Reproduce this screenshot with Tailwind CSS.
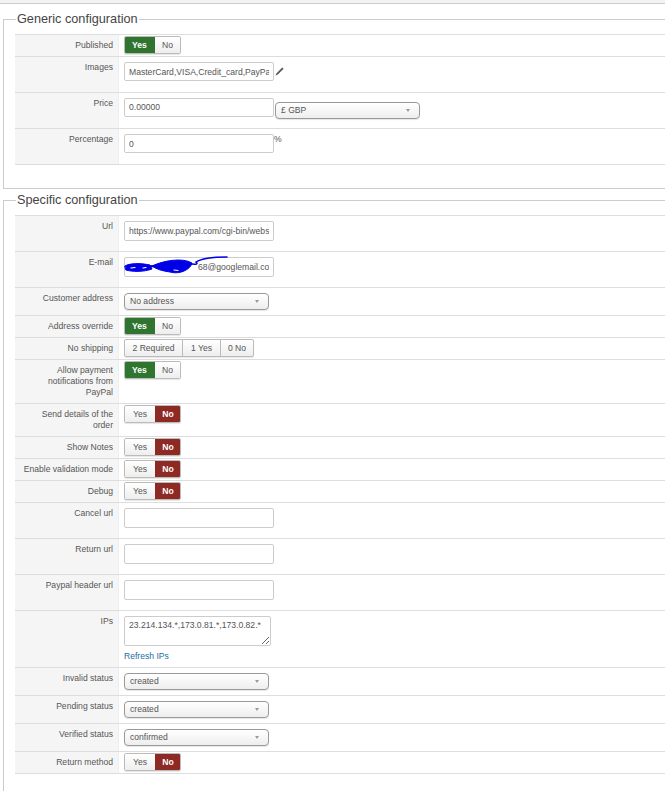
<!DOCTYPE html>
<html lang="en">

<head>
    <meta charset="UTF-8" />
    <meta name="viewport" content="width=device-width, initial-scale=1" />
    <title>Payment method</title>
    <script src="https://cdn.jsdelivr.net/npm/@tailwindcss/browser@4"></script>
</head>

<body class="bg-white h-[791px] overflow-hidden font-['Liberation_Sans',Arial,sans-serif] text-[8.6px] leading-[11px] text-[#555]">
    <div class="h-1 bg-[#f3f3f3] border-b border-[#ccc]"></div>

    <!-- Generic configuration -->
    <fieldset class="ml-[3px] mt-[7px] -mr-2 h-[178px] border border-[#ccc] pl-[11px]">
        <legend class="ml-[1px] px-[1px] text-[12.7px] leading-4 text-[#444]">Generic configuration</legend>
        <div class="mt-[7px] border-t border-[#ddd]">
            <div class="flex h-[22px] border-b border-[#ddd]">
                <div class="w-[104px] shrink-0 bg-[#f5f5f5] border-r border-[#eee] pr-[5px] pt-[5px] text-right">Published</div>
                <div class="pl-[5px] pt-[1px]">
                    <div class="flex w-[57px] h-[18px] rounded-[2px] border border-[#bbb] overflow-hidden shadow-[0_1px_1px_rgba(0,0,0,0.1)]">
                        <span class="w-[31px] -m-px mr-0 bg-[#2f752f] text-white font-bold flex items-center justify-center">Yes</span>
                        <span class="flex-1 bg-gradient-to-b from-white to-[#eee] flex items-center justify-center">No</span>
                    </div>
                </div>
            </div>
            <div class="flex h-[36px] border-b border-[#ddd]">
                <div class="w-[104px] shrink-0 bg-[#f5f5f5] border-r border-[#eee] pr-[5px] pt-[5px] text-right">Images</div>
                <div class="pl-[5px] pt-[5px] flex items-start">
                    <input class="w-[150px] h-[19px] border border-[#ccc] rounded-[2px] px-[4px]" value="MasterCard,VISA,Credit_card,PayPal" />
                    <svg class="mt-[4px] ml-[1px]" width="10" height="10" viewBox="0 0 10 10"><path d="M0.5 9.5 L1.4 7.4 L7.2 1.4 L8.6 2.8 L2.8 8.6 Z" fill="#555" /></svg>
                </div>
            </div>
            <div class="flex h-[36px] border-b border-[#ddd]">
                <div class="w-[104px] shrink-0 bg-[#f5f5f5] border-r border-[#eee] pr-[5px] pt-[5px] text-right">Price</div>
                <div class="pl-[5px] pt-[5px] flex items-start">
                    <input class="w-[150px] h-[19px] border border-[#ccc] rounded-[2px] px-[4px] pb-px" value="0.00000" />
                    <div class="mt-[4px] ml-px w-[145px] h-[17px] rounded-[4px] border border-[#999] shadow-[0_1px_1px_rgba(0,0,0,0.1)] bg-gradient-to-b from-white to-[#eee] flex items-center justify-between pl-[5px] pr-[9px]"><span>£ GBP</span><span class="border-x-[2px] border-t-[3px] border-x-transparent border-t-[#999]"></span></div>
                </div>
            </div>
            <div class="flex h-[36px] border-b border-[#ddd]">
                <div class="w-[104px] shrink-0 bg-[#f5f5f5] border-r border-[#eee] pr-[5px] pt-[5px] text-right">Percentage</div>
                <div class="pl-[5px] pt-[5px] flex items-start">
                    <input class="w-[150px] h-[19px] border border-[#ccc] rounded-[2px] px-[4px]" value="0" />
                    <span>%</span>
                </div>
            </div>
        </div>
    </fieldset>

    <!-- Specific configuration -->
    <fieldset class="ml-[3px] mt-[3px] -mr-2 border border-b-0 border-[#ccc] pl-[11px] h-[600px]">
        <legend class="ml-[1px] px-[1px] text-[12.7px] leading-4 text-[#444]">Specific configuration</legend>
        <div class="mt-[7px] border-t border-[#ddd]">
            <div class="flex h-[36px] border-b border-[#ddd]">
                <div class="w-[104px] shrink-0 bg-[#f5f5f5] border-r border-[#eee] pr-[5px] pt-[5px] text-right">Url</div>
                <div class="pl-[5px] pt-[5px]"><input class="block w-[150px] h-[20px] border border-[#ccc] rounded-[2px] px-[4px] pb-px" value="https://www.paypal.com/cgi-bin/webscr" /></div>
            </div>
            <div class="flex h-[36px] border-b border-[#ddd]">
                <div class="w-[104px] shrink-0 bg-[#f5f5f5] border-r border-[#eee] pr-[5px] pt-[5px] text-right">E-mail</div>
                <div class="pl-[5px] pt-[5px] relative">
                    <input class="block w-[150px] h-[20px] border border-[#ccc] rounded-[2px] pl-[73px] pr-[4px]" value="68@googlemail.com" />
                    <!-- scribbled out address -->
                    <svg class="absolute left-[5px] top-[3px]" width="106" height="20" viewBox="0 0 106 20" fill="none" stroke="#0000e6" stroke-linecap="round">
                        <path d="M1 11 C6 8 16 8 26 10 L28 14 C20 17 8 17 2 15 Z" fill="#0000e6" stroke-width="1" />
                        <path d="M24 11 C34 12 40 11 48 9" stroke-width="2" />
                        <path d="M28 11 C38 6 58 2 68 8 C67 14 56 20 46 17 C38 16 32 14 28 11 Z" fill="#0000e6" stroke-width="1" />
                        <path d="M64 8 C74 11 74 8 72 7 C78 3 88 2 103 2" stroke-width="1.5" />
                        <path d="M7 13 L11 12.5 M19 13 L22 12.5 M50 15 L54 15.5" stroke="#fff" stroke-width="1.2" />
                    </svg>
                </div>
            </div>
            <div class="flex h-[28px] border-b border-[#ddd]">
                <div class="w-[104px] shrink-0 bg-[#f5f5f5] border-r border-[#eee] pr-[5px] pt-[5px] text-right">Customer address</div>
                <div class="pl-[5px] pt-[5px]"><div class="w-[145px] h-[17px] rounded-[4px] border border-[#999] shadow-[0_1px_1px_rgba(0,0,0,0.1)] bg-gradient-to-b from-white to-[#eee] flex items-center justify-between pl-[5px] pr-[9px]"><span>No address</span><span class="border-x-[2px] border-t-[3px] border-x-transparent border-t-[#999]"></span></div></div>
            </div>
            <div class="flex h-[22px] border-b border-[#ddd]">
                <div class="w-[104px] shrink-0 bg-[#f5f5f5] border-r border-[#eee] pr-[5px] pt-[5px] text-right">Address override</div>
                <div class="pl-[5px] pt-[1px]">
                    <div class="flex w-[57px] h-[18px] rounded-[2px] border border-[#bbb] overflow-hidden shadow-[0_1px_1px_rgba(0,0,0,0.1)]">
                        <span class="w-[31px] -m-px mr-0 bg-[#2f752f] text-white font-bold flex items-center justify-center">Yes</span>
                        <span class="flex-1 bg-gradient-to-b from-white to-[#eee] flex items-center justify-center">No</span>
                    </div>
                </div>
            </div>
            <div class="flex h-[22px] border-b border-[#ddd]">
                <div class="w-[104px] shrink-0 bg-[#f5f5f5] border-r border-[#eee] pr-[5px] pt-[5px] text-right">No shipping</div>
                <div class="pl-[5px] pt-[1px]">
                    <div class="flex w-[130px] h-[18px] rounded-[2px] border border-[#bbb] overflow-hidden bg-gradient-to-b from-white to-[#eee] shadow-[0_1px_1px_rgba(0,0,0,0.1)]">
                        <span class="w-[58px] border-r border-[#bbb] flex items-center justify-center">2 Required</span>
                        <span class="w-[38px] border-r border-[#bbb] flex items-center justify-center">1 Yes</span>
                        <span class="flex-1 flex items-center justify-center">0 No</span>
                    </div>
                </div>
            </div>
            <div class="flex h-[44px] border-b border-[#ddd]">
                <div class="w-[104px] shrink-0 bg-[#f5f5f5] border-r border-[#eee] pl-[8px] pr-[5px] pt-[5px] text-right">Allow payment notifications from PayPal</div>
                <div class="pl-[5px] pt-[1px]">
                    <div class="flex w-[57px] h-[18px] rounded-[2px] border border-[#bbb] overflow-hidden shadow-[0_1px_1px_rgba(0,0,0,0.1)]">
                        <span class="w-[31px] -m-px mr-0 bg-[#2f752f] text-white font-bold flex items-center justify-center">Yes</span>
                        <span class="flex-1 bg-gradient-to-b from-white to-[#eee] flex items-center justify-center">No</span>
                    </div>
                </div>
            </div>
            <div class="flex h-[33px] border-b border-[#ddd]">
                <div class="w-[104px] shrink-0 bg-[#f5f5f5] border-r border-[#eee] pl-[8px] pr-[5px] pt-[5px] text-right">Send details of the order</div>
                <div class="pl-[5px] pt-[1px]">
                    <div class="flex w-[57px] h-[18px] rounded-[2px] border border-[#bbb] overflow-hidden shadow-[0_1px_1px_rgba(0,0,0,0.1)]">
                        <span class="w-[30px] bg-gradient-to-b from-white to-[#eee] flex items-center justify-center">Yes</span>
                        <span class="flex-1 -m-px ml-0 bg-[#8e2a24] text-white font-bold flex items-center justify-center">No</span>
                    </div>
                </div>
            </div>
            <div class="flex h-[22px] border-b border-[#ddd]">
                <div class="w-[104px] shrink-0 bg-[#f5f5f5] border-r border-[#eee] pr-[5px] pt-[5px] text-right">Show Notes</div>
                <div class="pl-[5px] pt-[1px]">
                    <div class="flex w-[57px] h-[18px] rounded-[2px] border border-[#bbb] overflow-hidden shadow-[0_1px_1px_rgba(0,0,0,0.1)]">
                        <span class="w-[30px] bg-gradient-to-b from-white to-[#eee] flex items-center justify-center">Yes</span>
                        <span class="flex-1 -m-px ml-0 bg-[#8e2a24] text-white font-bold flex items-center justify-center">No</span>
                    </div>
                </div>
            </div>
            <div class="flex h-[22px] border-b border-[#ddd]">
                <div class="w-[104px] shrink-0 bg-[#f5f5f5] border-r border-[#eee] pr-[5px] pt-[5px] text-right">Enable validation mode</div>
                <div class="pl-[5px] pt-[1px]">
                    <div class="flex w-[57px] h-[18px] rounded-[2px] border border-[#bbb] overflow-hidden shadow-[0_1px_1px_rgba(0,0,0,0.1)]">
                        <span class="w-[30px] bg-gradient-to-b from-white to-[#eee] flex items-center justify-center">Yes</span>
                        <span class="flex-1 -m-px ml-0 bg-[#8e2a24] text-white font-bold flex items-center justify-center">No</span>
                    </div>
                </div>
            </div>
            <div class="flex h-[22px] border-b border-[#ddd]">
                <div class="w-[104px] shrink-0 bg-[#f5f5f5] border-r border-[#eee] pr-[5px] pt-[5px] text-right">Debug</div>
                <div class="pl-[5px] pt-[1px]">
                    <div class="flex w-[57px] h-[18px] rounded-[2px] border border-[#bbb] overflow-hidden shadow-[0_1px_1px_rgba(0,0,0,0.1)]">
                        <span class="w-[30px] bg-gradient-to-b from-white to-[#eee] flex items-center justify-center">Yes</span>
                        <span class="flex-1 -m-px ml-0 bg-[#8e2a24] text-white font-bold flex items-center justify-center">No</span>
                    </div>
                </div>
            </div>
            <div class="flex h-[36px] border-b border-[#ddd]">
                <div class="w-[104px] shrink-0 bg-[#f5f5f5] border-r border-[#eee] pr-[5px] pt-[5px] text-right">Cancel url</div>
                <div class="pl-[5px] pt-[5px]"><input class="block w-[150px] h-[20px] border border-[#ccc] rounded-[2px]" /></div>
            </div>
            <div class="flex h-[36px] border-b border-[#ddd]">
                <div class="w-[104px] shrink-0 bg-[#f5f5f5] border-r border-[#eee] pr-[5px] pt-[5px] text-right">Return url</div>
                <div class="pl-[5px] pt-[5px]"><input class="block w-[150px] h-[20px] border border-[#ccc] rounded-[2px]" /></div>
            </div>
            <div class="flex h-[36px] border-b border-[#ddd]">
                <div class="w-[104px] shrink-0 bg-[#f5f5f5] border-r border-[#eee] pr-[5px] pt-[5px] text-right">Paypal header url</div>
                <div class="pl-[5px] pt-[5px]"><input class="block w-[150px] h-[20px] border border-[#ccc] rounded-[2px]" /></div>
            </div>
            <div class="flex h-[57px] border-b border-[#ddd]">
                <div class="w-[104px] shrink-0 bg-[#f5f5f5] border-r border-[#eee] pr-[5px] pt-[5px] text-right">IPs</div>
                <div class="pl-[5px] pt-[5px]">
                    <textarea class="block w-[147px] h-[30px] border border-[#ccc] rounded-[2px] px-[4px] py-[3px]">23.214.134.*,173.0.81.*,173.0.82.*</textarea>
                    <div class="mt-[5px] text-[#1c6ea4]">Refresh IPs</div>
                </div>
            </div>
            <div class="flex h-[28px] border-b border-[#ddd]">
                <div class="w-[104px] shrink-0 bg-[#f5f5f5] border-r border-[#eee] pr-[5px] pt-[5px] text-right">Invalid status</div>
                <div class="pl-[5px] pt-[5px]"><div class="w-[145px] h-[17px] rounded-[4px] border border-[#999] shadow-[0_1px_1px_rgba(0,0,0,0.1)] bg-gradient-to-b from-white to-[#eee] flex items-center justify-between pl-[5px] pr-[9px]"><span>created</span><span class="border-x-[2px] border-t-[3px] border-x-transparent border-t-[#999]"></span></div></div>
            </div>
            <div class="flex h-[28px] border-b border-[#ddd]">
                <div class="w-[104px] shrink-0 bg-[#f5f5f5] border-r border-[#eee] pr-[5px] pt-[5px] text-right">Pending status</div>
                <div class="pl-[5px] pt-[5px]"><div class="w-[145px] h-[17px] rounded-[4px] border border-[#999] shadow-[0_1px_1px_rgba(0,0,0,0.1)] bg-gradient-to-b from-white to-[#eee] flex items-center justify-between pl-[5px] pr-[9px]"><span>created</span><span class="border-x-[2px] border-t-[3px] border-x-transparent border-t-[#999]"></span></div></div>
            </div>
            <div class="flex h-[28px] border-b border-[#ddd]">
                <div class="w-[104px] shrink-0 bg-[#f5f5f5] border-r border-[#eee] pr-[5px] pt-[5px] text-right">Verified status</div>
                <div class="pl-[5px] pt-[5px]"><div class="w-[145px] h-[17px] rounded-[4px] border border-[#999] shadow-[0_1px_1px_rgba(0,0,0,0.1)] bg-gradient-to-b from-white to-[#eee] flex items-center justify-between pl-[5px] pr-[9px]"><span>confirmed</span><span class="border-x-[2px] border-t-[3px] border-x-transparent border-t-[#999]"></span></div></div>
            </div>
            <div class="flex h-[22px] border-b border-[#ddd]">
                <div class="w-[104px] shrink-0 bg-[#f5f5f5] border-r border-[#eee] pr-[5px] pt-[5px] text-right">Return method</div>
                <div class="pl-[5px] pt-[1px]">
                    <div class="flex w-[57px] h-[18px] rounded-[2px] border border-[#bbb] overflow-hidden shadow-[0_1px_1px_rgba(0,0,0,0.1)]">
                        <span class="w-[30px] bg-gradient-to-b from-white to-[#eee] flex items-center justify-center">Yes</span>
                        <span class="flex-1 -m-px ml-0 bg-[#8e2a24] text-white font-bold flex items-center justify-center">No</span>
                    </div>
                </div>
            </div>
        </div>
    </fieldset>
</body>

</html>
